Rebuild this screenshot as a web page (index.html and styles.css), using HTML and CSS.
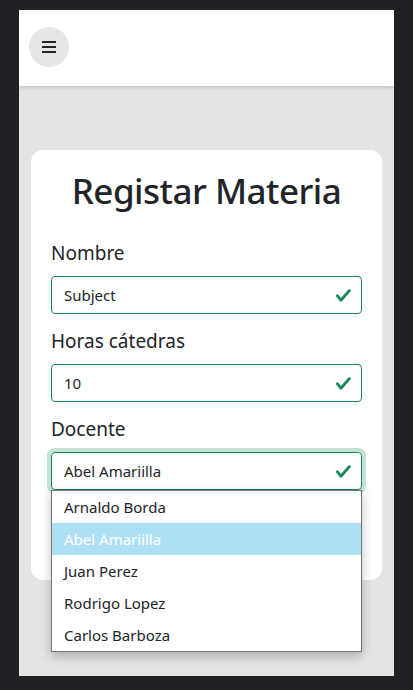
FILE: index.html
```html
<!DOCTYPE html>
<html lang="es">
<head>
<meta charset="utf-8">
<title>Registar Materia</title>
<link rel="stylesheet" href="styles.css">
</head>
<body>
<div class="screen">
  <header class="topbar">
    <button class="menu-btn" aria-label="Menú">
      <svg width="14" height="12" viewBox="0 0 14 12"><rect x="0" y="0" width="14" height="2" fill="#212529"/><rect x="0" y="5" width="14" height="2" fill="#212529"/><rect x="0" y="10" width="14" height="2" fill="#212529"/></svg>
    </button>
  </header>
  <main class="content">
    <section class="card">
      <h1 class="title">Registar Materia</h1>
      <div class="group">
        <label class="label">Nombre</label>
        <div class="control">Subject<svg class="check" viewBox="0 0 8 8"><path fill="#198754" d="M2.3 6.73.6 4.53c-.4-1.04.46-1.4 1.1-.8l1.1 1.4 3.4-3.8c.6-.63 1.6-.27 1.2.7l-4 4.6c-.43.5-.8.4-1.1.1z"/></svg></div>
      </div>
      <div class="group">
        <label class="label">Horas cátedras</label>
        <div class="control">10<svg class="check" viewBox="0 0 8 8"><path fill="#198754" d="M2.3 6.73.6 4.53c-.4-1.04.46-1.4 1.1-.8l1.1 1.4 3.4-3.8c.6-.63 1.6-.27 1.2.7l-4 4.6c-.43.5-.8.4-1.1.1z"/></svg></div>
      </div>
      <div class="group">
        <label class="label">Docente</label>
        <div class="control focus">Abel Amariilla<svg class="check" viewBox="0 0 8 8"><path fill="#198754" d="M2.3 6.73.6 4.53c-.4-1.04.46-1.4 1.1-.8l1.1 1.4 3.4-3.8c.6-.63 1.6-.27 1.2.7l-4 4.6c-.43.5-.8.4-1.1.1z"/></svg></div>
        <ul class="dropdown">
          <li class="option">Arnaldo Borda</li>
          <li class="option selected">Abel Amariilla</li>
          <li class="option">Juan Perez</li>
          <li class="option">Rodrigo Lopez</li>
          <li class="option">Carlos Barboza</li>
        </ul>
      </div>
    </section>
  </main>
</div>
</body>
</html>
```
FILE: styles.css
```css
* { box-sizing: border-box; }
html, body { margin: 0; padding: 0; }
body {
  background: #202124;
  font-family: "Noto Sans", "Open Sans", sans-serif;
  color: #212529;
}
.screen {
  width: 375px;
  height: 666px;
  margin: 10px 0 0 19px;
  background: #e4e4e4;
  display: flex;
  flex-direction: column;
  overflow: hidden;
}
.topbar {
  height: 76px;
  flex: none;
  background: #fff;
  display: flex;
  align-items: center;
  padding-left: 10px;
  box-shadow: 0 1px 4px rgba(0,0,0,.18);
  position: relative;
  z-index: 1;
}
.menu-btn {
  width: 40px;
  height: 40px;
  border-radius: 50%;
  border: 0;
  background: #e6e6e6;
  display: flex;
  align-items: center;
  justify-content: center;
  padding: 0;
  margin-top: -2px;
}
.content {
  padding: 64px 12px 0;
}
.card {
  background: #fff;
  border-radius: 12px;
  height: 430px;
  padding: 19px 20px 0;
}
.title {
  margin: 0 0 25px;
  font-size: 35px;
  line-height: 44px;
  font-weight: 500;
  letter-spacing: -0.5px;
  text-align: center;
  color: #212529;
}
.group {
  margin-bottom: 12px;
  position: relative;
}
.label {
  display: block;
  font-size: 19px;
  line-height: 31px;
  margin-bottom: 7px;
}
.control {
  height: 38px;
  border: 1px solid #198754;
  border-radius: 4px;
  padding: 0 12px;
  display: flex;
  align-items: center;
  font-size: 15px;
  position: relative;
}
.control.focus {
  box-shadow: 0 0 0 4px rgba(25,135,84,.25);
}
.check {
  width: 17px;
  height: 17px;
  margin-left: auto;
  margin-right: -3px;
}
.dropdown {
  position: absolute;
  left: 0;
  top: 76px;
  width: 311px;
  margin: 0;
  padding: 0;
  list-style: none;
  background: #fff;
  border: 1px solid #767676;
  box-shadow: 0 4px 10px rgba(0,0,0,.25);
  z-index: 5;
}
.option {
  height: 32px;
  line-height: 33px;
  padding: 0 12px;
  font-size: 15px;
}
.option.selected {
  background: #ade0f5;
  color: #fff;
}
```
